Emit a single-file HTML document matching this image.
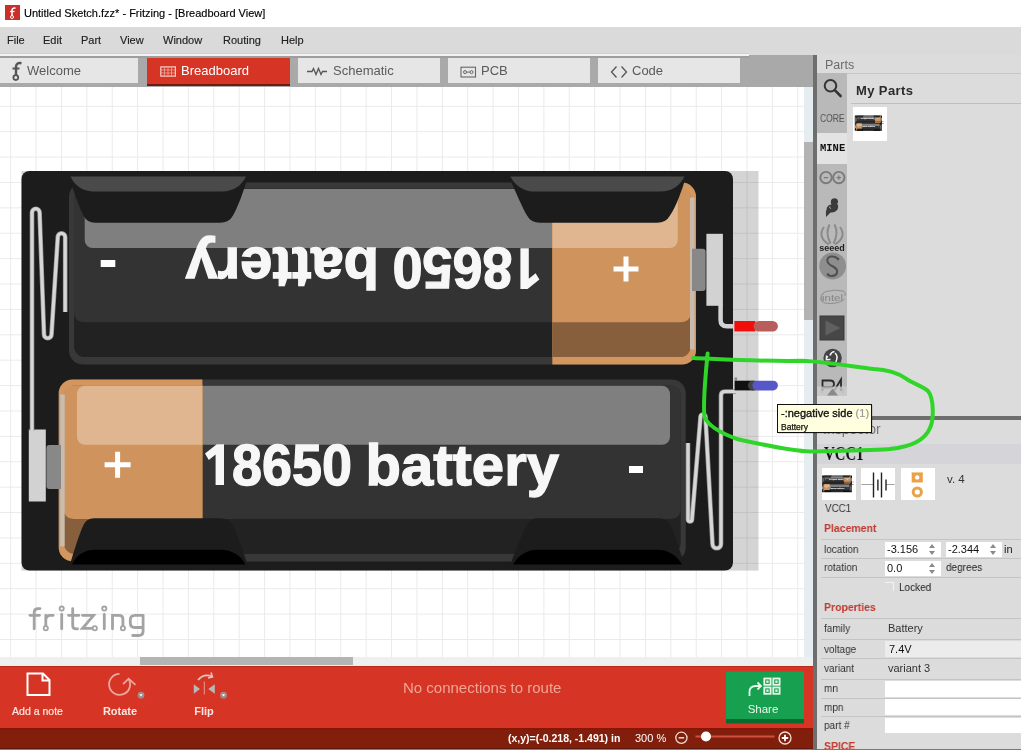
<!DOCTYPE html>
<html><head><meta charset="utf-8">
<style>
*{margin:0;padding:0;box-sizing:border-box}
html,body{width:1021px;height:750px;overflow:hidden;background:#fff;font-family:"Liberation Sans",sans-serif}
.t{will-change:transform}
.a{position:absolute}
#root{position:relative;width:1021px;height:750px;overflow:hidden}
.t{position:absolute;white-space:nowrap;line-height:1}
.n{transform:scaleX(0.91);transform-origin:0 0}
</style></head><body><div id="root">

<!-- title bar -->
<div class="a" style="left:0;top:0;width:1021px;height:27px;background:#fff"></div>
<div class="a" style="left:5px;top:5px;width:15px;height:15px;background:#c9302c"></div>
<svg class="a" style="left:5px;top:5px" width="15" height="15" viewBox="0 0 15 15"><path d="M10.5 3.2 Q7.5 2.5 7 5 V11" fill="none" stroke="#fff" stroke-width="1.5"/><path d="M5 6.5 H9.5" stroke="#fff" stroke-width="1.3"/><circle cx="7" cy="12" r="1.5" fill="none" stroke="#fff" stroke-width="1"/></svg>
<div class="t" style="left:24px;top:7.5px;font-size:11px;color:#000;-webkit-text-stroke:0.15px #000">Untitled Sketch.fzz* - Fritzing - [Breadboard View]</div>

<!-- menu bar -->
<div class="a" style="left:0;top:27px;width:1021px;height:28px;background:#dadada"></div>
<div class="a" style="left:0;top:53px;width:749px;height:0.6px;background:#d0d0d0"></div>
<div class="t" style="left:7px;top:34.5px;font-size:11px;color:#222;-webkit-text-stroke:0.15px #222">File</div>
<div class="t" style="left:43px;top:34.5px;font-size:11px;color:#222;-webkit-text-stroke:0.15px #222">Edit</div>
<div class="t" style="left:81px;top:34.5px;font-size:11px;color:#222;-webkit-text-stroke:0.15px #222">Part</div>
<div class="t" style="left:120px;top:34.5px;font-size:11px;color:#222;-webkit-text-stroke:0.15px #222">View</div>
<div class="t" style="left:163px;top:34.5px;font-size:11px;color:#222;-webkit-text-stroke:0.15px #222">Window</div>
<div class="t" style="left:223px;top:34.5px;font-size:11px;color:#222;-webkit-text-stroke:0.15px #222">Routing</div>
<div class="t" style="left:281px;top:34.5px;font-size:11px;color:#222;-webkit-text-stroke:0.15px #222">Help</div>

<!-- tab bar -->
<div class="a" style="left:0;top:55px;width:813px;height:32px;background:#a9a9a9"></div>
<div class="a" style="left:0;top:53.6px;width:749px;height:2px;background:#f2f2f2"></div>
<div class="a" style="left:0;top:55.6px;width:749px;height:2.1px;background:#9e9e9e"></div>
<div class="a" style="left:0;top:57.7px;width:138px;height:25.8px;background:#e6e6e6"></div>
<div class="a" style="left:147px;top:57.7px;width:142.5px;height:26.5px;background:#d63425"></div>
<div class="a" style="left:147px;top:84.2px;width:142.5px;height:2.3px;background:#6e1a10"></div>
<div class="a" style="left:297.5px;top:57.7px;width:142px;height:25.8px;background:#e6e6e6"></div>
<div class="a" style="left:448px;top:57.7px;width:141.5px;height:25.8px;background:#e6e6e6"></div>
<div class="a" style="left:598px;top:57.7px;width:142px;height:25.8px;background:#e6e6e6"></div>
<div class="t" style="left:27px;top:64px;font-size:13px;color:#5a5a5a">Welcome</div>
<div class="t" style="left:180.5px;top:64px;font-size:13px;color:#fff">Breadboard</div>
<div class="t" style="left:332.5px;top:64px;font-size:13px;color:#5a5a5a">Schematic</div>
<div class="t" style="left:480.5px;top:64px;font-size:13px;color:#5a5a5a">PCB</div>
<div class="t" style="left:632.4px;top:64px;font-size:13px;color:#5a5a5a">Code</div>
<svg class="a" style="left:0;top:55px" width="700" height="32" viewBox="0 55 700 32">
 <path d="M21.5 63.2 Q16.5 62.3 16 66.5 V76" fill="none" stroke="#555" stroke-width="2.4"/>
 <path d="M12.5 68.5 H19.5" stroke="#555" stroke-width="2"/>
 <circle cx="15.8" cy="77.6" r="2.4" fill="none" stroke="#555" stroke-width="1.8"/>
 <rect x="160.8" y="66.9" width="14.6" height="9.2" fill="none" stroke="#f6d0c8" stroke-width="1.2"/>
 <path d="M164.5 67v9 M168 67v9 M171.5 67v9 M161 70h14 M161 73h14" stroke="#f0b8ac" stroke-width="0.7"/>
 <path d="M307 71.5 H312 L313.5 68.5 L316 74.5 L318.5 68.5 L321 74.5 L322.5 71.5 H327" fill="none" stroke="#555" stroke-width="1.3"/>
 <rect x="461" y="67.2" width="14.5" height="9.8" fill="none" stroke="#666" stroke-width="1.1"/>
 <circle cx="465" cy="72.1" r="1.5" fill="none" stroke="#666" stroke-width="1"/><circle cx="471.5" cy="72.1" r="1.5" fill="none" stroke="#666" stroke-width="1"/>
 <path d="M466.5 72.1 H470" stroke="#666" stroke-width="1"/>
 <path d="M616.5 66.5 L611.5 72 L616.5 77.5 M621.5 66.5 L626.5 72 L621.5 77.5" fill="none" stroke="#555" stroke-width="1.3"/>
</svg>

<!-- canvas -->
<div class="a" style="left:0;top:87px;width:813px;height:579px;background-color:#fff;
background-image:linear-gradient(to right,#eaeaea 1px,transparent 1px),linear-gradient(to bottom,#eaeaea 1px,transparent 1px);
background-size:25.4px 25.4px;background-position:10.2px 18.8px"></div>
<!-- vertical scrollbar -->
<div class="a" style="left:804px;top:87px;width:9px;height:570px;background:#e6edf1"></div>
<div class="a" style="left:804px;top:142px;width:9px;height:178px;background:#b3b3b3"></div>
<!-- horizontal scrollbar -->
<div class="a" style="left:0;top:657px;width:813px;height:9px;background:#eef0f0"></div>
<div class="a" style="left:140px;top:657px;width:213px;height:8px;background:#b3b5b5"></div>

<!-- fritzing logo -->
<svg class="a" style="left:0;top:590px" width="160" height="60" viewBox="0 590 160 60">
 <g fill="none" stroke="#a3a3a3" stroke-width="2.8" stroke-linecap="round">
  <path d="M34.2 628.8 V612.5 Q34.2 608.6 38 608.6 H40"/>
  <path d="M30 615.3 H39.4"/>
  <path d="M45.8 626.3 V615.3 M45.8 619 Q46.5 615.3 50 615.3 H53.2"/>
  <path d="M61.7 614.5 V628.8"/>
  <path d="M72.7 608.6 V625.5 Q72.7 628.8 76 628.8 H77.5 M68.5 615.3 H78.9"/>
  <path d="M82.5 615.3 H93.6 L82.5 628.4 H92.5"/>
  <path d="M104.3 614.5 V628.8"/>
  <path d="M112.5 628.8 V615.3 H119 Q122.9 615.3 122.9 619 V626.3"/>
  <path d="M143.1 615.3 H135 Q130.3 615.3 130.3 620 V623 Q130.3 627.5 135 627.5 H143.1 M143.1 615.3 V631 Q143.1 635.5 138.6 635.5 H132.7"/>
 </g>
 <g fill="#fff" stroke="#a3a3a3" stroke-width="1.8">
  <circle cx="45.8" cy="628.2" r="2.1"/>
  <circle cx="61.7" cy="608.6" r="2.1"/>
  <circle cx="94.8" cy="628.2" r="2.1"/>
  <circle cx="104.3" cy="608.6" r="2.1"/>
  <circle cx="122.9" cy="628.2" r="2.1"/>
 </g>
</svg>
<!-- battery svg placeholder -->
<svg class="a" style="left:0;top:0" width="1021" height="750" viewBox="0 0 1021 750">
<defs>
 <clipPath id="cu"><rect x="-10" y="-10" width="153.7" height="220"/></clipPath>
 <g id="cell">
  <rect x="0" y="0" width="627" height="182" rx="14" fill="#383838"/>
  <rect x="5" y="6" width="617" height="168.5" rx="11" fill="#222"/>
  <path d="M5 16 Q5 6 15 6 L612 6 Q622 6 622 16 L622 128.7 Q622 139.7 611 139.7 L16 139.7 Q5 139.7 5 128.7 Z" fill="#333"/>
  <rect x="18.3" y="6.4" width="593" height="59" rx="8" fill="#7f7f7f"/>
  <g clip-path="url(#cu)">
   <rect x="0" y="0" width="627" height="182" rx="14" fill="#d3965e"/>
   <rect x="5" y="6" width="617" height="168.5" rx="11" fill="#875f3c"/>
   <path d="M5 16 Q5 6 15 6 L612 6 Q622 6 622 16 L622 128.7 Q622 139.7 611 139.7 L16 139.7 Q5 139.7 5 128.7 Z" fill="#cf945d"/>
   <rect x="18.3" y="6.4" width="593" height="59" rx="8" fill="#dfb690"/>
   <rect x="1.5" y="15" width="4.5" height="152" fill="#c9bcae"/>
  </g>
 </g>
</defs>
<rect x="21.5" y="171" width="737" height="399.6" fill="#000" fill-opacity="0.17"/>
<g id="holder">
<rect x="21.5" y="171" width="711.5" height="399.6" rx="8" fill="#1c1c1c"/>
<use href="#cell" transform="translate(58.7 379.4)"/>
<use href="#cell" transform="translate(696 182.6) scale(-1 1)"/>
<!-- top cell clips -->
<path d="M68.5 176.4 L248 176.4 C244 190 238 207 233 215.5 Q229 222.8 220 222.8 L95 222.8 Q87 222.8 83.5 215.5 C79 207 73.5 190 68.5 176.4 Z" fill="#1c1c1c"/>
<path d="M70.5 176.6 L246 176.6 C241.5 185.5 234 191.5 222 191.5 L92 191.5 C80 190.5 74 184 70.5 176.6 Z" fill="#4a4a4a"/>
<path d="M508.8 176.4 L686 176.4 C682 190 676 207 670 215.5 Q666 222.8 657 222.8 L540 222.8 Q531 222.8 527 215.5 C522 207 515 190 508.8 176.4 Z" fill="#1c1c1c"/>
<path d="M510.4 176.6 L684.5 176.6 C680 186 672 191.5 660 191.5 L531 191.5 C521 190 514 184 510.4 176.6 Z" fill="#4a4a4a"/>
<!-- bottom cell clips -->
<path d="M70 564.6 L247.5 564.6 C243 551 237 533 232.5 525 Q228.6 518.3 220 518.3 L94 518.3 Q86.5 518.3 83.5 525 C79.5 533 74 551 70 564.6 Z" fill="#1c1c1c"/>
<path d="M72 564.6 L245.5 564.6 C241 556 233 549.8 220 549.8 L96 549.8 C83 549.8 76 556 72 564.6 Z" fill="#000"/>
<path d="M510.6 564.6 L684.5 564.6 C680 551 674 533 670.5 525 Q667 518.3 659 518.3 L537 518.3 Q530 518.3 527 525 C522.5 533 515 551 510.6 564.6 Z" fill="#1c1c1c"/>
<path d="M513 564.6 L682 564.6 C677 556 669 549.8 657 549.8 L538 549.8 C526 549.8 518 556 513 564.6 Z" fill="#000"/>
<!-- signs -->
<rect x="100.7" y="260" width="14.6" height="7" fill="#fff"/>
<rect x="629" y="466" width="14" height="7" fill="#fff"/>
<path d="M613.5 266.5 h25 v5 h-25 z M623.5 256.5 h5 v25 h-5 z" fill="#fff"/>
<path d="M104.6 462.2 h26 v5 h-26 z M115.1 451.7 h5 v26 h-5 z" fill="#fff"/>
<!-- text -->
<g id="txt" font-family="Liberation Sans" font-weight="bold" font-size="58" fill="#f7f7f7" stroke="#f7f7f7" stroke-width="1.3">
<path d="M215.6 484.9 V454.5 L208.8 460 L205 453.6 L216.8 444.2 H224 V484.9 Z" stroke="none"/>
<text x="232" y="484.8" textLength="120" lengthAdjust="spacingAndGlyphs">8650</text>
<text x="365.5" y="484.8" textLength="193.5" lengthAdjust="spacingAndGlyphs">battery</text>
</g>
<use href="#txt" transform="rotate(180 372.2 366.6)"/>
<!-- terminals top cell right -->
<path d="M692 248.7 H702.6 Q705.6 248.7 705.6 251.7 V288 Q705.6 291 702.6 291 H692 Z" fill="#888"/>
<rect x="706.4" y="233.8" width="16.5" height="72" fill="#d2d2d2"/>
<path d="M720.6 305 V320 Q720.6 326.2 726.8 326.2 H736" fill="none" stroke="#d2d2d2" stroke-width="4.5"/>
<rect x="734.4" y="321" width="21" height="10.4" fill="#f20d0d"/>
<rect x="753.6" y="321" width="24.3" height="10.4" rx="5.2" fill="#b85c5c"/>
<!-- terminals bottom cell left -->
<path d="M61 445 H49.4 Q46.4 445 46.4 448 V486 Q46.4 489 49.4 489 H61 Z" fill="#888"/>
<rect x="28.8" y="429.5" width="17" height="72" fill="#d2d2d2"/>
<!-- springs -->
<path d="M32 431 L32 212.5 A3.8 3.8 0 0 1 39.6 212.5 L44 334.5 A3.75 3.75 0 0 0 51.5 334.5 L57.8 237 A3.7 3.7 0 0 1 65.2 237 L65.2 312" fill="none" stroke="#8e8e8e" stroke-width="4.6"/><path d="M32 431 L32 212.5 A3.8 3.8 0 0 1 39.6 212.5 L44 334.5 A3.75 3.75 0 0 0 51.5 334.5 L57.8 237 A3.7 3.7 0 0 1 65.2 237 L65.2 312" fill="none" stroke="#d6d6d6" stroke-width="3.2"/>
<path d="M736 391.5 L725 391.5 Q721 391.5 721 395.5 L721 544 A4.25 4.25 0 0 1 712.5 544 L705.5 417 A2.5 2.5 0 0 0 700.5 417 L692 519.5 A2 2 0 0 1 688 519.5 L688 443" fill="none" stroke="#8e8e8e" stroke-width="4.6"/><path d="M736 391.5 L725 391.5 Q721 391.5 721 395.5 L721 544 A4.25 4.25 0 0 1 712.5 544 L705.5 417 A2.5 2.5 0 0 0 700.5 417 L692 519.5 A2 2 0 0 1 688 519.5 L688 443" fill="none" stroke="#d6d6d6" stroke-width="3.2"/>
<rect x="734.6" y="380.7" width="19" height="9.7" fill="#111"/>
<rect x="734.6" y="377.5" width="2.5" height="3.5" fill="#888"/>
<rect x="748" y="380.7" width="12" height="9.7" rx="4.85" fill="#444"/>
<rect x="752.4" y="380.7" width="25.5" height="9.7" rx="4.85" fill="#5757c9"/>
</g>
</svg>

<!-- separator -->
<div class="a" style="left:813px;top:55px;width:4px;height:695px;background:#6e6e6e"></div>

<!-- right panel -->
<div class="a" style="left:817px;top:55px;width:204px;height:695px;background:#dcdcdc"></div>
<div class="t" style="left:825px;top:58.5px;font-size:12.5px;color:#6b6b6b">Parts</div>
<div class="a" style="left:847px;top:73px;width:174px;height:1px;background:#c6c6c6"></div>
<div class="a" style="left:817px;top:73px;width:30px;height:323px;background:#b9b9b9"></div>
<div class="a" style="left:817px;top:133px;width:30px;height:30.5px;background:#e3e3e3"></div>
<svg class="a" style="left:817px;top:73px" width="30" height="330" viewBox="817 73 30 330">
 <circle cx="830.5" cy="85.8" r="5.8" fill="none" stroke="#333" stroke-width="2"/>
 <path d="M834.8 90.2 L840.6 96" stroke="#333" stroke-width="2.6" stroke-linecap="round"/>
 <g fill="none" stroke="#7a7a7a" stroke-width="1.9">
  <circle cx="826" cy="177.6" r="5.7"/><circle cx="838.8" cy="177.6" r="5.7"/>
 </g>
 <path d="M823.8 177.6h4.4 M836.6 177.6h4.4 M838.8 175.4v4.4" stroke="#7a7a7a" stroke-width="1.3"/>
 <path d="M833 198.5 Q837.5 197.5 838 201.5 Q838.5 203 837 203.5 Q839 206 837.5 209.5 Q835 213 830.5 212.5 L826 217 Q825.5 211 827 207.5 Q828.5 204.5 831.5 204.5 Q830.5 202.5 831 200.5 Q831.5 199 833 198.5 Z" fill="#3a3a3a"/>
 <path d="M830 206.5 Q829 208 830.8 208.6" fill="none" stroke="#c4c4c4" stroke-width="0.9"/>
 <g fill="none" stroke="#8a8a8a" stroke-width="2">
  <path d="M829.5 224.5 Q825 233 830.5 243.5 M834.5 224.5 Q839 233 833.5 243.5 M824 227 Q817 237 829 244.5 M840 227 Q847 237 835 244.5"/>
 </g>
 <text x="832" y="251" font-size="8.8" font-weight="bold" text-anchor="middle" fill="#1e1e1e" font-family="Liberation Sans" textLength="25.5" lengthAdjust="spacingAndGlyphs">seeed</text>
 <circle cx="832.6" cy="266" r="13.4" fill="#8e8e8e"/>
 <path d="M837.5 258.5 Q835 256 831 256.5 Q826.5 257.5 827.5 261.5 Q828.5 264.5 833 266.5 Q838 269 837 273 Q835.5 276.5 830.5 276 Q828.5 275.5 828 274.5" fill="none" stroke="#505050" stroke-width="2"/>
 <circle cx="838" cy="259" r="1.3" fill="#505050"/><circle cx="828" cy="274.5" r="1.3" fill="#505050"/>
 <path d="M822.5 300.5 Q818.5 294.5 826 291.5 Q835 289 843 291 Q846.5 292.5 845 296" fill="none" stroke="#8a8a8a" stroke-width="0.9"/>
 <path d="M821 297 Q819 303.5 830 303.5 Q840 303.5 844.5 299" fill="none" stroke="#8a8a8a" stroke-width="0.9"/>
 <text x="832.5" y="300.5" font-size="9.5" text-anchor="middle" fill="#858585" font-family="Liberation Sans" textLength="21" lengthAdjust="spacingAndGlyphs">intel</text>
 <rect x="820" y="316" width="24" height="24" fill="#474747" stroke="#383838" stroke-width="1"/>
 <path d="M825.5 320.5 L840.5 328 L825.5 335.5 Z" fill="#606060"/>
 <circle cx="832.6" cy="358" r="9.2" fill="#444"/>
 <path d="M835 353 Q838.5 356 836 361.5 Q835 363.5 834 364.5 M834.5 351.5 Q831 352 830 355.5 M828 356.5 Q826.5 357.5 826 359.5 M826.5 355.5 L826.5 359.8 L830.5 359.5" fill="none" stroke="#f2f2f2" stroke-width="1.5"/>
 <path d="M822.5 391 V380.5 H830 Q834 380.5 834 384 Q834 387.5 830 387.5 H822.5 M834 391 L841 379.5 V391" fill="none" stroke="#2a2a2a" stroke-width="1.8"/>
 <rect x="817" y="386.5" width="30" height="13" fill="#cfcfcf" fill-opacity="0.75"/>
 <path d="M832.5 388.5 L838 395.5 H827 Z" fill="#8a8a8a"/>
 <path d="M822 388.5 H826 M839 388.5 H843 M822 388.5 V393 M843 388.5 V393" stroke="#b4b4b4" stroke-width="0.8" fill="none"/>
</svg>
<div class="t" style="left:820px;top:112.5px;font-size:11.5px;color:#555;transform:scaleX(0.74);transform-origin:0 0">CORE</div>
<div class="t" style="left:820px;top:143px;font-size:10.5px;font-weight:bold;color:#111;font-family:'Liberation Mono',monospace">MINE</div>
<div class="t" style="left:855.5px;top:84px;font-size:13px;font-weight:bold;color:#2a2a2a;letter-spacing:0.4px">My Parts</div>
<div class="a" style="left:851px;top:103px;width:170px;height:1px;background:#bfbfbf"></div>
<div class="a" style="left:853px;top:107px;width:34px;height:34px;background:#fff"></div>
<svg class="a" style="left:853px;top:107px" width="34" height="34" viewBox="853 107 34 34"><use href="#holder" transform="translate(853.98 108.96) scale(0.03823)"/></svg>

<!-- splitter -->
<div class="a" style="left:817px;top:396px;width:204px;height:20px;background:#dcdcdc"></div>
<div class="a" style="left:817px;top:416px;width:204px;height:3.5px;background:#6e6e6e"></div>

<!-- inspector -->
<div class="t" style="left:823px;top:422px;font-size:14px;color:#777">Inspector</div>
<div class="a" style="left:817px;top:443.5px;width:204px;height:20px;background:#d4d4d9"></div>
<div class="t" style="left:824px;top:444px;font-size:19px;font-weight:bold;color:#111;font-family:'Liberation Serif',serif;transform:scaleX(0.78);transform-origin:0 0">VCC1</div>
<div class="a" style="left:822px;top:468px;width:34px;height:31.5px;background:#fff"></div>
<div class="a" style="left:861px;top:468px;width:34px;height:31.5px;background:#fff"></div>
<div class="a" style="left:901px;top:468px;width:34px;height:31.5px;background:#fff"></div>
<svg class="a" style="left:822px;top:468px" width="113" height="32" viewBox="822 468 113 32">
 <use href="#holder" transform="translate(821.09 468.2) scale(0.04216)"/>
 <path d="M861.3 484.5 H873.5 M886 484.5 H894.6" stroke="#999" stroke-width="0.9" fill="none"/>
 <path d="M873.5 472.4 V497.6 M881.5 472.4 V497.6 M877.9 479.5 V490.6 M886 479.5 V490.6" stroke="#222" stroke-width="1.4" fill="none"/>
 <rect x="911.7" y="472.4" width="11.1" height="10.1" fill="#eaa24a"/><circle cx="917.2" cy="477.4" r="2.2" fill="#fff"/>
 <circle cx="917.3" cy="492" r="4.1" fill="none" stroke="#eaa24a" stroke-width="3"/>
</svg>
<div class="t" style="left:947px;top:474px;font-size:11.5px;color:#333">v. 4</div>
<div class="t" style="left:824.5px;top:503px;font-size:11.5px;color:#333;transform:scaleX(0.85);transform-origin:0 0">VCC1</div>

<div class="t n" style="left:824px;top:522.8px;font-size:11.5px;font-weight:bold;color:#c0392e">Placement</div>
<div class="a" style="left:821px;top:539px;width:200px;height:1px;background:#c4c4c4"></div>
<div class="t n" style="left:824px;top:543.5px;font-size:11px;color:#333">location</div>
<div class="a" style="left:885px;top:541.5px;width:56px;height:15px;background:#fff"></div>
<div class="t" style="left:887px;top:543.5px;font-size:11px;color:#111">-3.156</div>
<div class="a" style="left:946px;top:541.5px;width:56px;height:15px;background:#fff"></div>
<div class="t" style="left:948px;top:543.5px;font-size:11px;color:#111">-2.344</div>
<div class="t" style="left:1004px;top:543.5px;font-size:11px;color:#222">in</div>
<div class="a" style="left:821px;top:558px;width:200px;height:1px;background:#c4c4c4"></div>
<div class="t n" style="left:824px;top:562px;font-size:11px;color:#333">rotation</div>
<div class="a" style="left:885px;top:560.5px;width:56px;height:15px;background:#fff"></div>
<div class="t" style="left:887px;top:563px;font-size:11px;color:#111">0.0</div>
<div class="t n" style="left:946px;top:562px;font-size:11px;color:#222">degrees</div>
<svg class="a" style="left:925px;top:541px" width="80" height="36" viewBox="925 541 80 36">
 <g fill="#8a8a8a">
  <path d="M929 548 L932 544 L935 548 Z M929 551 L932 555 L935 551 Z"/>
  <path d="M990 548 L993 544 L996 548 Z M990 551 L993 555 L996 551 Z"/>
  <path d="M929 567 L932 563 L935 567 Z M929 570 L932 574 L935 570 Z"/>
 </g>
</svg>
<div class="a" style="left:885px;top:582px;width:9px;height:9px;border-top:1px solid #f4f4f4;border-right:1px solid #f4f4f4"></div>
<div class="t n" style="left:899px;top:581.5px;font-size:11px;color:#222">Locked</div>
<div class="a" style="left:821px;top:577px;width:200px;height:1px;background:#c4c4c4"></div>

<div class="t n" style="left:824px;top:601.8px;font-size:11.5px;font-weight:bold;color:#c0392e">Properties</div>
<div class="a" style="left:821px;top:618px;width:200px;height:1px;background:#c4c4c4"></div>
<div class="t n" style="left:824px;top:623px;font-size:11px;color:#333">family</div>
<div class="t" style="left:887.5px;top:623px;font-size:11px;color:#333">Battery</div>
<div class="a" style="left:821px;top:638.5px;width:200px;height:1px;background:#c4c4c4"></div>
<div class="a" style="left:885px;top:640.5px;width:136px;height:16px;background:#ececec"></div>
<div class="t n" style="left:824px;top:644px;font-size:11px;color:#333">voltage</div>
<div class="t" style="left:888.5px;top:644px;font-size:11px;color:#111">7.4V</div>
<div class="a" style="left:821px;top:658px;width:200px;height:1px;background:#c4c4c4"></div>
<div class="t n" style="left:824px;top:662.5px;font-size:11px;color:#333">variant</div>
<div class="t" style="left:887.5px;top:662.5px;font-size:11px;color:#333">variant 3</div>
<div class="a" style="left:821px;top:678.5px;width:200px;height:1.5px;background:#c4c4c4"></div>
<div class="a" style="left:885px;top:680.5px;width:136px;height:16px;background:#fff"></div>
<div class="t n" style="left:824px;top:683px;font-size:11px;color:#333">mn</div>
<div class="a" style="left:821px;top:697.5px;width:200px;height:1px;background:#c4c4c4"></div>
<div class="a" style="left:885px;top:699px;width:136px;height:15.5px;background:#fff"></div>
<div class="t n" style="left:824px;top:702px;font-size:11px;color:#333">mpn</div>
<div class="a" style="left:821px;top:716px;width:200px;height:1px;background:#c4c4c4"></div>
<div class="a" style="left:885px;top:718px;width:136px;height:15px;background:#fff"></div>
<div class="t n" style="left:824px;top:720px;font-size:11px;color:#333">part #</div>
<div class="t n" style="left:824px;top:740.8px;font-size:11.5px;font-weight:bold;color:#c0392e">SPICE</div>
<div class="a" style="left:817px;top:748.5px;width:204px;height:1.5px;background:#777"></div>

<!-- bottom toolbar -->
<div class="a" style="left:0;top:666px;width:813px;height:62px;background:#d63425"></div>
<div class="a" style="left:0;top:665.5px;width:813px;height:1.5px;background:#b82a1e"></div>
<div class="a" style="left:0;top:728px;width:813px;height:20px;background:#821f0c"></div>
<div class="a" style="left:0;top:728px;width:813px;height:1.5px;background:#8a1405"></div>
<div class="a" style="left:0;top:747.5px;width:813px;height:1.3px;background:#5c1a0c"></div>
<div class="a" style="left:0;top:748.8px;width:813px;height:1.2px;background:#8f7a70"></div>
<div class="t" style="left:403px;top:680px;font-size:15px;color:#f0a595">No connections to route</div>
<svg class="a" style="left:0;top:666px" width="813" height="84" viewBox="0 666 813 84">
 <path d="M27.5 673.5 H43 L49.5 680 V695 H27.5 Z M42.5 673.5 V680.5 H49.5" fill="none" stroke="#fff" stroke-width="2"/>
 <path d="M119.5 673.9 A10.5 10.5 0 1 0 128.6 679" fill="none" stroke="#eba89c" stroke-width="1.8"/>
 <path d="M123.1 684.2 L128.6 678.7 L135.5 684.9" fill="none" stroke="#eba89c" stroke-width="1.8"/>
 <circle cx="141" cy="695.2" r="3.4" fill="#a08a8a"/><path d="M139.2 694.3 H142.8 L141 696.6 Z" fill="#fff"/>
 <path d="M193.8 684.2 L200 689 L193.8 693.8 Z M214.8 684.2 L208.3 689 L214.8 693.8 Z" fill="#b4b9b9"/>
 <path d="M204.3 681.5 V694.5" stroke="#e89a90" stroke-width="1"/>
 <path d="M198 680 Q204 673 212 676.5" fill="none" stroke="#e0c8c4" stroke-width="1.7"/>
 <path d="M211 672.5 L212.5 677 L208 678" fill="none" stroke="#e0c8c4" stroke-width="1.5"/>
 <circle cx="223.5" cy="695.2" r="3.4" fill="#a08a8a"/><path d="M221.7 694.3 H225.3 L223.5 696.6 Z" fill="#fff"/>
 <rect x="726" y="671.5" width="78" height="48" fill="#16a050"/>
 <rect x="726" y="719" width="78" height="4.5" fill="#0b6b2e"/>
 <g fill="none" stroke="#e8f8ea" stroke-width="1.8">
  <rect x="764.3" y="678.5" width="6.3" height="6.3"/><rect x="773.3" y="678.5" width="6.3" height="6.3"/>
  <rect x="764.3" y="687.5" width="6.3" height="6.3"/><rect x="773.3" y="687.5" width="6.3" height="6.3"/>
  <path d="M749.5 696 V692 Q749.5 686 756 686 H760.5"/>
  <path d="M757.5 682.5 L761 686 L757.5 689.5"/>
 </g>
 <g fill="#e8f8ea"><rect x="766.3" y="680.5" width="2.3" height="2.3"/><rect x="775.3" y="680.5" width="2.3" height="2.3"/><rect x="766.3" y="689.5" width="2.3" height="2.3"/><rect x="775.3" y="689.5" width="2.3" height="2.3"/></g>
 <circle cx="681.4" cy="737.8" r="5.6" fill="none" stroke="#f4dcd4" stroke-width="1.3"/>
 <path d="M678.6 737.8 H684.2" stroke="#f4dcd4" stroke-width="1.5"/>
 <path d="M695.5 736.5 H774.5" stroke="#d0503e" stroke-width="2"/>
 <circle cx="706" cy="736.5" r="5" fill="#fff"/>
 <circle cx="785" cy="738" r="6" fill="none" stroke="#f4dcd4" stroke-width="1.3"/>
 <path d="M781.8 738 H788.2 M785 734.8 V741.2" stroke="#fff" stroke-width="1.8"/>
</svg>
<div class="t" style="left:0;top:705.5px;width:75px;text-align:center;font-size:10.5px;color:#fce8e4;-webkit-text-stroke:0.2px #fce8e4">Add a note</div>
<div class="t" style="left:90px;top:706px;width:60px;text-align:center;font-size:11px;font-weight:bold;color:#fbe6e2">Rotate</div>
<div class="t" style="left:174px;top:706px;width:60px;text-align:center;font-size:11px;font-weight:bold;color:#fbe6e2">Flip</div>
<div class="t" style="left:724px;top:704px;width:78px;text-align:center;font-size:11.5px;color:#e8f8ea">Share</div>
<div class="t" style="left:507.5px;top:732.5px;font-size:10.5px;font-weight:bold;color:#fff">(x,y)=(-0.218, -1.491) in</div>
<div class="t" style="left:635px;top:732.5px;font-size:11px;color:#fff">300 %</div>

<!-- overlay: green line + tooltip -->
<svg class="a" style="left:0;top:0" width="1021" height="750" viewBox="0 0 1021 750">
 <path d="M693.2 357.9 C720 359 760 361.6 802 360.8 C830 362 860 368 874 369 C885 369.5 898 373 906 378.6 C914 384 924 387 928 391 C934 398 934 420 930 428 C925 440 910 447 890 449 C860 451 830 451 810 451.4 C790 451 760 444 738 439.3 C720 433 708 425 704.5 417 C703 405 705 380 707.6 353.6" fill="none" stroke="#30d52a" stroke-width="4" stroke-linecap="round" stroke-linejoin="round"/>
</svg>
<div class="a" style="left:777px;top:404px;width:94.5px;height:28.5px;background:#ffffdf;border:1.5px solid #111;box-shadow:1px 1px 0 rgba(0,0,0,0.12)"></div>
<div class="t" style="left:781px;top:407.5px;font-size:11px;color:#111;-webkit-text-stroke:0.35px #111">-:negative side <span style="color:#999;-webkit-text-stroke:0.2px #999">(1)</span></div>
<div class="t" style="left:781px;top:423px;font-size:8.5px;color:#111;-webkit-text-stroke:0.25px #111">Battery</div>

</div></body></html>
